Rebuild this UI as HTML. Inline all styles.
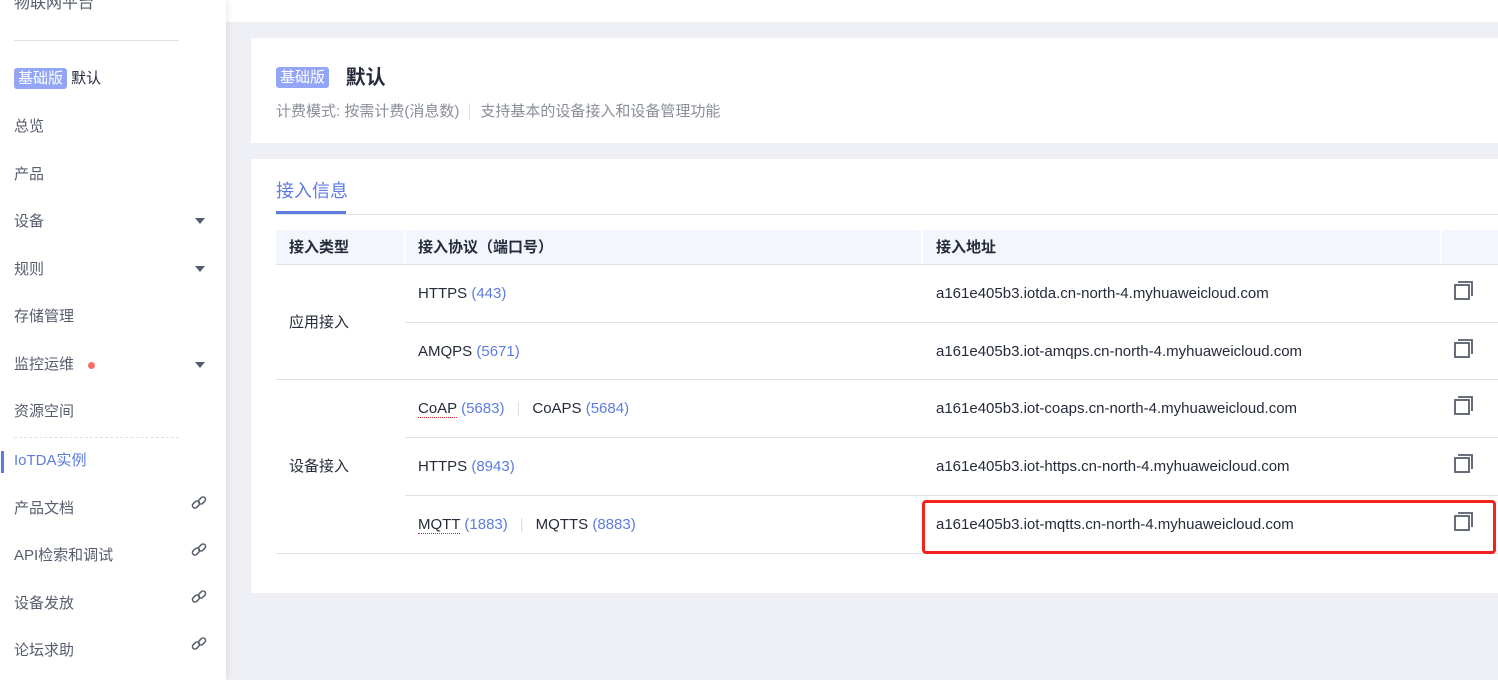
<!DOCTYPE html>
<html><head><meta charset="utf-8"><style>
*{margin:0;padding:0;box-sizing:border-box}
body{width:1498px;height:680px;overflow:hidden;background:#eef0f5;font-family:"Liberation Sans","Noto Sans CJK SC",sans-serif;font-size:15px;color:#252b3a;position:relative}
.side{position:absolute;left:0;top:0;width:226px;height:680px;background:#fff;box-shadow:2px 0 6px rgba(0,0,0,.08)}
.si{position:absolute;left:14px;color:#575d6c;font-size:15px;line-height:20px;margin-top:1px}
.arr{position:absolute;left:195px;width:0;height:0;border-left:5px solid transparent;border-right:5px solid transparent;border-top:6px solid #575d6c}
.lk{position:absolute;left:190px}
.tag{display:inline-block;background:#93a5f7;color:#fff;border-radius:3px;padding:0 4px;font-size:15px;line-height:21px}
.card{position:absolute;left:251px;right:0;background:#fff}
.cell{position:absolute;font-size:15px;line-height:20px;margin-top:1px}
.b{color:#5e7ce0}
.hl{position:absolute;height:1px;background:#dfe1e6}
.cp{position:absolute;left:1454px}
</style></head><body>
<div style="position:absolute;left:226px;top:0;right:0;height:22px;background:#fff"></div>
<div class="side">
<div class="si" style="top:-7px;font-size:16px">物联网平台</div>
<div style="position:absolute;left:14px;top:40px;width:165px;height:1px;background:#dfe1e6"></div>
<div class="si" style="top:67px;color:#252b3a"><span class="tag">基础版</span> 默认</div>
<div class="si" style="top:116px">总览</div>
<div class="si" style="top:164px">产品</div>
<div class="si" style="top:211px">设备</div><div class="arr" style="top:218px"></div>
<div class="si" style="top:259px">规则</div><div class="arr" style="top:266px"></div>
<div class="si" style="top:306px">存储管理</div>
<div class="si" style="top:354px">监控运维</div><div style="position:absolute;left:88px;top:362px;width:7px;height:7px;border-radius:50%;background:#f66f6a"></div><div class="arr" style="top:362px"></div>
<div class="si" style="top:401px">资源空间</div>
<div style="position:absolute;left:14px;top:437px;width:165px;border-top:1px dashed #dfe1e6"></div>
<div style="position:absolute;left:1px;top:451px;width:3px;height:22px;background:#5e7ce0"></div>
<div class="si" style="top:450px;color:#5e7ce0">IoTDA实例</div>
<div class="si" style="top:498px">产品文档</div>
<div class="si" style="top:545px">API检索和调试</div>
<div class="si" style="top:593px">设备发放</div>
<div class="si" style="top:640px">论坛求助</div>
<svg class="lk" style="top:494px" width="18" height="18" viewBox="0 0 18 18" fill="none" stroke="#575d6c" stroke-width="1.5"><rect x="2" y="8" width="8" height="5" rx="2.5" transform="rotate(-45 6 10.5)"/><rect x="8" y="4" width="8" height="5" rx="2.5" transform="rotate(-45 12 6.5)"/></svg>
<svg class="lk" style="top:541px" width="18" height="18" viewBox="0 0 18 18" fill="none" stroke="#575d6c" stroke-width="1.5"><rect x="2" y="8" width="8" height="5" rx="2.5" transform="rotate(-45 6 10.5)"/><rect x="8" y="4" width="8" height="5" rx="2.5" transform="rotate(-45 12 6.5)"/></svg>
<svg class="lk" style="top:588px" width="18" height="18" viewBox="0 0 18 18" fill="none" stroke="#575d6c" stroke-width="1.5"><rect x="2" y="8" width="8" height="5" rx="2.5" transform="rotate(-45 6 10.5)"/><rect x="8" y="4" width="8" height="5" rx="2.5" transform="rotate(-45 12 6.5)"/></svg>
<svg class="lk" style="top:635px" width="18" height="18" viewBox="0 0 18 18" fill="none" stroke="#575d6c" stroke-width="1.5"><rect x="2" y="8" width="8" height="5" rx="2.5" transform="rotate(-45 6 10.5)"/><rect x="8" y="4" width="8" height="5" rx="2.5" transform="rotate(-45 12 6.5)"/></svg>
</div>

<div class="card" style="top:38px;height:105px">
<div style="position:absolute;left:25px;top:27px;font-size:20px;font-weight:bold;line-height:26px"><span class="tag" style="font-weight:normal;vertical-align:2px">基础版</span>&nbsp;&nbsp; 默认</div>
<div style="position:absolute;left:25px;top:62px;color:#8a8e99;font-size:15px">计费模式: 按需计费(消息数)<span style="display:inline-block;width:1px;height:16px;background:#dfe1e6;margin:0 10px;vertical-align:-3px"></span>支持基本的设备接入和设备管理功能</div>
</div>

<div class="card" style="top:159px;height:434px">
<div style="position:absolute;left:25px;top:18px;font-size:18px;color:#5e7ce0">接入信息</div>
<div class="hl" style="left:25px;right:0;top:55px"></div>
<div style="position:absolute;left:25px;top:52px;width:70px;height:3px;background:#5e7ce0"></div>
</div>

<div style="position:absolute;left:276px;top:230px;width:1222px;height:34px;background:#f3f6fc"></div>
<div style="position:absolute;left:404px;top:230px;width:2px;height:34px;background:#fff"></div>
<div style="position:absolute;left:921px;top:230px;width:2px;height:34px;background:#fff"></div>
<div style="position:absolute;left:1440px;top:230px;width:2px;height:34px;background:#fff"></div>
<div class="cell" style="left:289px;top:237px;font-weight:bold">接入类型</div>
<div class="cell" style="left:418px;top:237px;font-weight:bold">接入协议（端口号）</div>
<div class="cell" style="left:936px;top:237px;font-weight:bold">接入地址</div>
<div class="hl" style="left:276px;right:0;top:264px"></div>
<div class="hl" style="left:405px;right:0;top:322px"></div>
<div class="hl" style="left:276px;right:0;top:379px"></div>
<div class="hl" style="left:405px;right:0;top:437px"></div>
<div class="hl" style="left:405px;right:0;top:495px"></div>
<div class="hl" style="left:276px;right:0;top:553px"></div>

<div class="cell" style="left:289px;top:312px">应用接入</div>
<div class="cell" style="left:289px;top:456px">设备接入</div>

<div class="cell" style="left:418px;top:283px">HTTPS <span class="b">(443)</span></div>
<div class="cell" style="left:418px;top:341px">AMQPS <span class="b">(5671)</span></div>
<div class="cell" style="left:418px;top:398px"><span style="border-bottom:1px dotted #e02020">CoAP</span> <span class="b">(5683)</span><span style="color:#dfe1e6;margin:0 12px">|</span>CoAPS <span class="b">(5684)</span></div>
<div class="cell" style="left:418px;top:456px">HTTPS <span class="b">(8943)</span></div>
<div class="cell" style="left:418px;top:514px"><span style="border-bottom:1px dotted #e02020">MQTT</span> <span class="b">(1883)</span><span style="color:#dfe1e6;margin:0 12px">|</span>MQTTS <span class="b">(8883)</span></div>

<div class="cell" style="left:936px;top:283px">a161e405b3.iotda.cn-north-4.myhuaweicloud.com</div>
<div class="cell" style="left:936px;top:341px">a161e405b3.iot-amqps.cn-north-4.myhuaweicloud.com</div>
<div class="cell" style="left:936px;top:398px">a161e405b3.iot-coaps.cn-north-4.myhuaweicloud.com</div>
<div class="cell" style="left:936px;top:456px">a161e405b3.iot-https.cn-north-4.myhuaweicloud.com</div>
<div class="cell" style="left:936px;top:514px">a161e405b3.iot-mqtts.cn-north-4.myhuaweicloud.com</div>

<svg class="cp" style="top:280px" width="20" height="20" viewBox="0 0 20 20" fill="none" stroke="#575d6c" stroke-width="1.8"><rect x="1" y="5" width="14" height="14"/><path d="M4 2H18V16"/></svg>
<svg class="cp" style="top:338px" width="20" height="20" viewBox="0 0 20 20" fill="none" stroke="#575d6c" stroke-width="1.8"><rect x="1" y="5" width="14" height="14"/><path d="M4 2H18V16"/></svg>
<svg class="cp" style="top:395px" width="20" height="20" viewBox="0 0 20 20" fill="none" stroke="#575d6c" stroke-width="1.8"><rect x="1" y="5" width="14" height="14"/><path d="M4 2H18V16"/></svg>
<svg class="cp" style="top:453px" width="20" height="20" viewBox="0 0 20 20" fill="none" stroke="#575d6c" stroke-width="1.8"><rect x="1" y="5" width="14" height="14"/><path d="M4 2H18V16"/></svg>
<svg class="cp" style="top:511px" width="20" height="20" viewBox="0 0 20 20" fill="none" stroke="#575d6c" stroke-width="1.8"><rect x="1" y="5" width="14" height="14"/><path d="M4 2H18V16"/></svg>

<div style="position:absolute;left:922px;top:500px;width:574px;height:54px;border:3px solid #f4231a;border-radius:4px"></div>
</body></html>
